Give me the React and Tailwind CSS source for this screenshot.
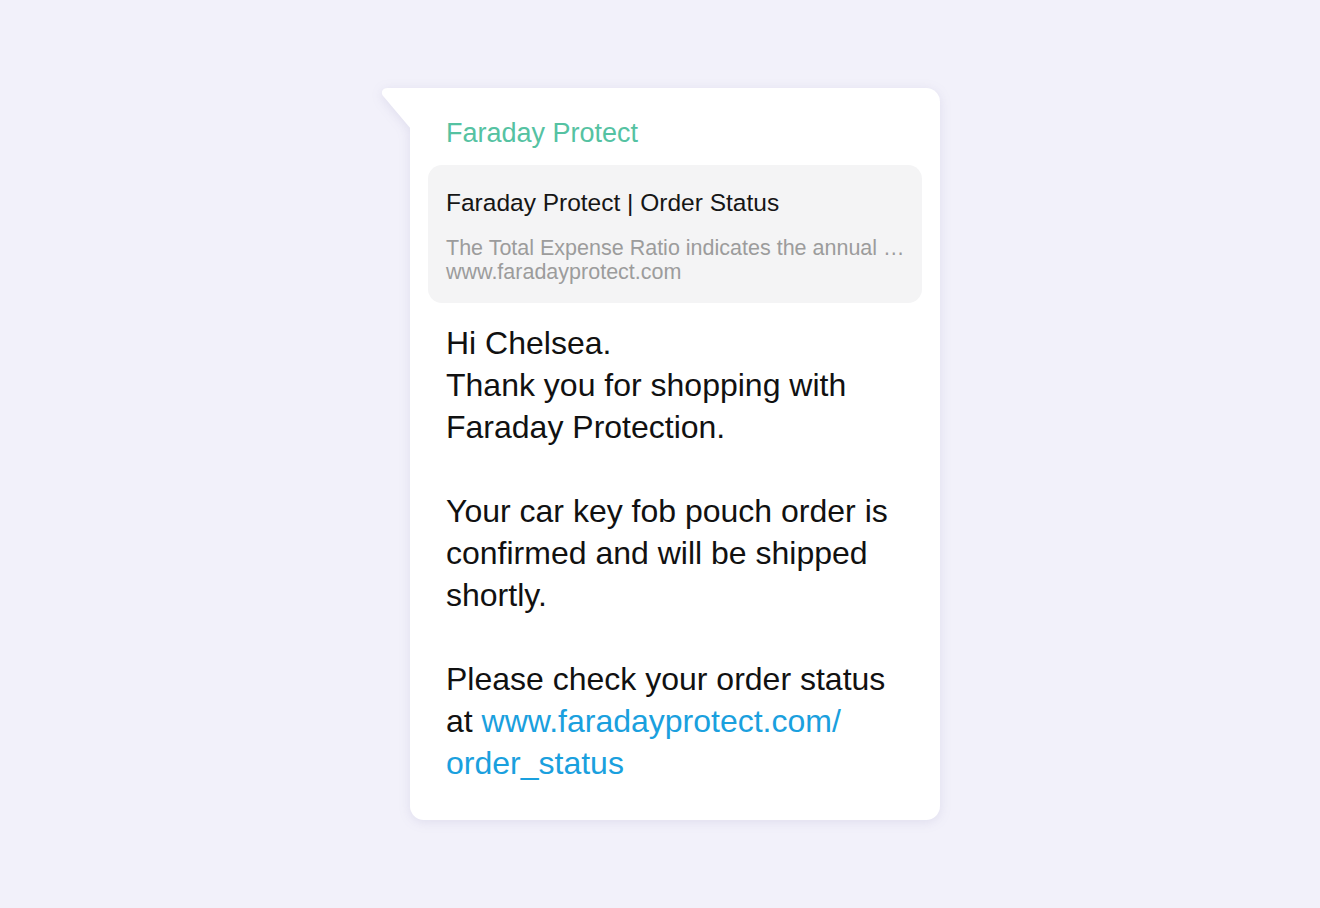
const App = () => {
  return (
    <div
      className="min-h-screen w-full bg-[#f2f1fa] pl-[410px] pt-[88px]"
      style={{ fontFamily: '"Liberation Sans", Arial, sans-serif' }}
    >
      <div className="relative w-[530px] drop-shadow-[0_2px_6px_rgba(90,80,150,0.12)]">
        {/* bubble tail */}
        <svg
          className="absolute left-[-30px] top-0"
          width="31"
          height="42"
          viewBox="0 0 31 42"
        >
          <path d="M31 0 H8 C2 0 0 5 4 9 L31 41 Z" fill="#ffffff" />
        </svg>

        <div className="rounded-[14px] rounded-tl-none bg-white px-[18px] pb-[36px] pt-[29px]">
          <p className="px-[18px] text-[27px] leading-[32px] text-[#55c2a2]">Faraday Protect</p>

          <div className="mt-[16px] rounded-[14px] bg-[#f4f4f5] px-[18px] pb-[19px] pt-[23px]">
            <p className="text-[24.5px] leading-[30px] text-[#161616]">Faraday Protect | Order Status</p>
            <div className="mt-[18px] text-[21.5px] leading-[24px] text-[#9c9c9c]">
              <p className="whitespace-nowrap">The Total Expense Ratio indicates the annual …</p>
              <p>www.faradayprotect.com</p>
            </div>
          </div>

          <div className="mt-[19px] px-[18px] text-[32px] leading-[42px] text-[#111111]">
            <p>
              Hi Chelsea.
              <br />
              Thank you for shopping with
              <br />
              Faraday Protection.
            </p>
            <p className="mt-[42px]">
              Your car key fob pouch order is
              <br />
              confirmed and will be shipped
              <br />
              shortly.
            </p>
            <p className="mt-[42px]">
              Please check your order status
              <br />
              at <span className="text-[#1aa0de]">www.faradayprotect.com/</span>
              <br />
              <span className="text-[#1aa0de]">order_status</span>
            </p>
          </div>
        </div>
      </div>
    </div>
  )
}

export default App
